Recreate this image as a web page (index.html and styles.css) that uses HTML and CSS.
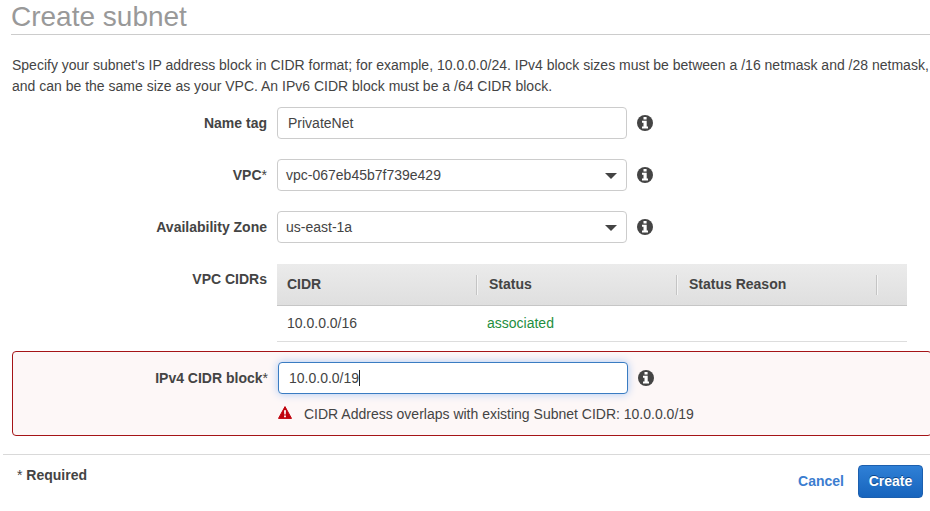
FILE: index.html
```html
<!DOCTYPE html>
<html lang="en">
<head>
<meta charset="utf-8">
<title>Create subnet</title>
<link rel="stylesheet" href="styles.css">
</head>
<body>
<svg class="defs" width="0" height="0" aria-hidden="true">
  <symbol id="info" viewBox="0 0 16 16">
    <circle cx="8" cy="8" r="8" fill="#444"/>
    <path d="M6.5 2H9.6v2.6H6.5zM5 5.8h4.7v5.6H11v2H5v-2h1.5V7.8H5z" fill="#fff"/>
  </symbol>
</svg>
<main class="page">
  <h1 class="title">Create subnet</h1>
  <p class="intro">Specify your subnet's IP address block in CIDR format; for example, 10.0.0.0/24. IPv4 block sizes must be between a /16 netmask and /28 netmask,<br>and can be the same size as your VPC. An IPv6 CIDR block must be a /64 CIDR block.</p>
  <form class="form">
    <div class="row">
      <label class="label">Name tag</label>
      <div class="field input">PrivateNet</div>
      <svg class="info"><use href="#info"/></svg>
    </div>
    <div class="row">
      <label class="label">VPC<span class="star">*</span></label>
      <div class="field select">vpc-067eb45b7f739e429<i class="caret"></i></div>
      <svg class="info"><use href="#info"/></svg>
    </div>
    <div class="row">
      <label class="label">Availability Zone</label>
      <div class="field select">us-east-1a<i class="caret"></i></div>
      <svg class="info"><use href="#info"/></svg>
    </div>
    <div class="cidrs">
      <div class="label">VPC CIDRs</div>
      <div class="table">
        <div class="thead"><div class="th">CIDR</div><div class="th">Status</div><div class="th">Status Reason</div></div>
        <div class="tr"><div class="td">10.0.0.0/16</div><div class="td ok">associated</div><div class="td"></div></div>
      </div>
    </div>
    <div class="error">
      <div class="row">
        <label class="label">IPv4 CIDR block<span class="star">*</span></label>
        <div class="field input focused">10.0.0.0/19<i class="cursor"></i></div>
        <svg class="info"><use href="#info"/></svg>
      </div>
      <div class="message">
        <svg class="warn" viewBox="0 0 14 13"><path d="M7 0.6L13.5 12.4H0.5z" fill="#c0040e" stroke="#c0040e" stroke-linejoin="round"/><path d="M6 4.2h2l-.3 4.2H6.3zM6.1 9.5h1.8v1.7H6.1z" fill="#fff"/></svg>
        <span>CIDR Address overlaps with existing Subnet CIDR: 10.0.0.0/19</span>
      </div>
    </div>
  </form>
  <footer class="footer">
    <div class="required"><span class="star">*</span> Required</div>
    <div class="actions"><a class="cancel">Cancel</a><button class="create" type="button">Create</button></div>
  </footer>
</main>
</body>
</html>
```

FILE: styles.css
```css
* { box-sizing: border-box; }
body {
  margin: 0;
  overflow: hidden;
  background: #fff;
  color: #444;
  font: 14px/20px "Liberation Sans", Arial, sans-serif;
}
.defs { display: block; }
.page { width: 930px; height: 511px; }
.title {
  height: 35px;
  margin: 0 0 0 11px;
  border-bottom: 1px solid #ccc;
  color: #999;
  font-size: 28px;
  font-weight: 400;
  line-height: 33px;
}
.intro {
  margin: 20px 0 10px 12px;
  line-height: 21px;
  white-space: nowrap;
}
.form { margin: 0; }
.row { display: flex; align-items: center; height: 32px; margin-bottom: 20px; }
.label { flex: none; width: 267px; margin-right: 10px; font-weight: 700; text-align: right; }
.star { font-weight: 400; }
.field {
  display: flex;
  align-items: center;
  width: 350px;
  height: 32px;
  border: 1px solid #ccc;
  border-radius: 4px;
  background: #fff;
}
.input { padding-left: 10px; }
.select { justify-content: space-between; padding: 0 9px 0 8px; }
.caret { margin-top: 2px; border: 6px solid transparent; border-top-color: #444; border-bottom: 0; }
.info { width: 16px; height: 16px; margin-left: 10px; }
.cidrs { display: flex; margin-top: 21px; }
.cidrs .label { padding-top: 5px; }
.table { width: 630px; }
.thead {
  display: flex;
  align-items: center;
  height: 42px;
  border-bottom: 1px solid #c6c6c6;
  background: linear-gradient(#ebebeb, #dfdfdf);
}
.th { width: 200px; padding-left: 12px; border-right: 1px solid #c4c4c4; font-weight: 700; line-height: 18px; padding-bottom: 2px; box-shadow: 1px 0 #f4f4f4; }
.th:first-child { padding-left: 10px; }
.tr { display: flex; align-items: center; height: 36px; padding-bottom: 2px; border-bottom: 1px solid #ddd; }
.td { width: 200px; padding-left: 10px; }
.ok { color: #1e8e3e; }
.error {
  width: 920px;
  height: 85px;
  margin: 9px 0 0 12px;
  padding-top: 10px;
  border: 1px solid #a51417;
  border-radius: 4px;
  background: #fdf7f7;
}
.error .row { margin-bottom: 10px; }
.error .label { width: 255px; }
.focused { border-color: #3a7cc2; box-shadow: 0 0 8px #a9c8f4; }
.cursor { width: 1px; height: 16px; background: #222; }
.message { display: flex; align-items: center; margin-left: 265px; }
.warn { width: 14px; height: 13px; margin: 0 12px 3px 0; }
.footer {
  display: flex;
  justify-content: space-between;
  margin: 18px 0 0 3px;
  border-top: 1px solid #d9d9d9;
}
.required { margin: 10px 0 0 14px; font-weight: 700; }
.actions { display: flex; align-items: center; gap: 14px; margin: 10px 7px 0 0; font-weight: 700; }
.cancel { padding-bottom: 2px; color: #3b7dd0; }
.create {
  width: 65px;
  height: 33px;
  padding: 0 0 2px;
  border: 1px solid #1c5fae;
  border-radius: 4px;
  background: linear-gradient(#2f80d6, #1764bd);
  color: #fff;
  font: inherit;
  text-shadow: 0 -1px #0b468b;
}
```
